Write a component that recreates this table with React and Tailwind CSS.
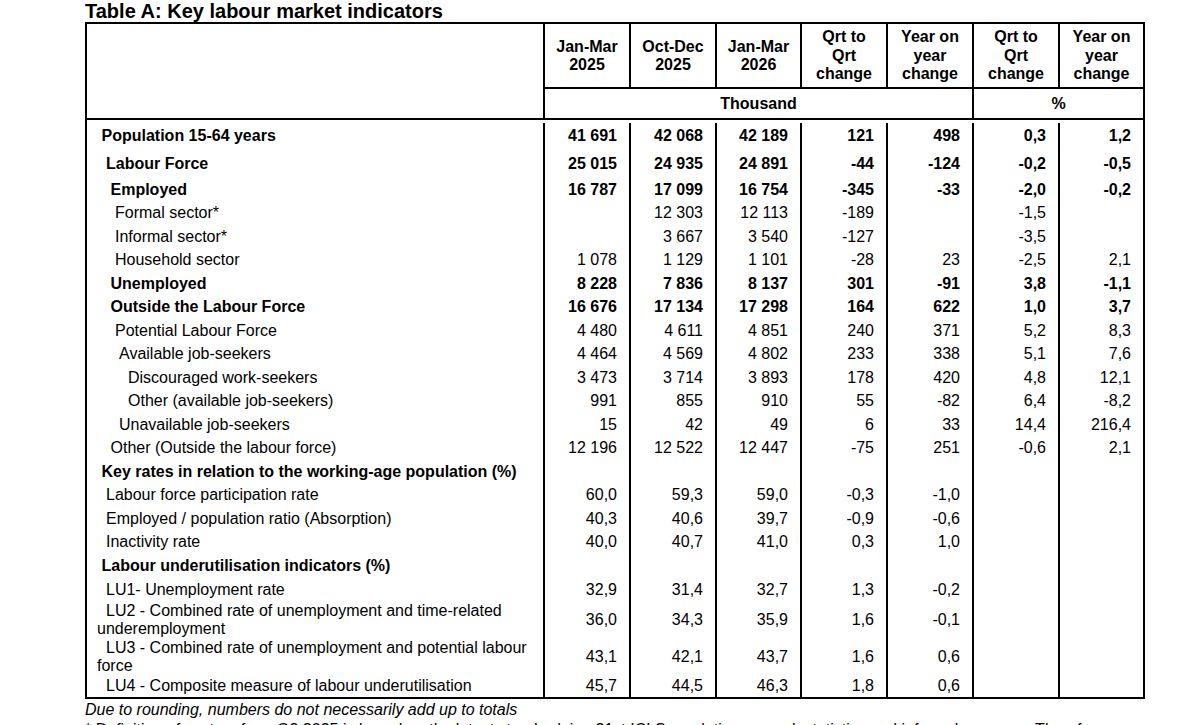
import React from 'react';

const COLS = 'grid grid-cols-[458px_86px_86px_85px_86px_86px_86px_83px]';

const heads = [
  ['Jan-Mar', '2025'],
  ['Oct-Dec', '2025'],
  ['Jan-Mar', '2026'],
  ['Qrt to', 'Qrt', 'change'],
  ['Year on', 'year', 'change'],
  ['Qrt to', 'Qrt', 'change'],
  ['Year on', 'year', 'change'],
];

const rows = [
  { label: 'Population 15-64 years', ind: 'indent-[4.5px]', bold: true, h: 'h-[29px] pt-[3px]', v: ['41 691', '42 068', '42 189', '121', '498', '0,3', '1,2'] },
  { label: 'Labour Force', ind: 'indent-[9px]', bold: true, h: 'h-[29px]', v: ['25 015', '24 935', '24 891', '-44', '-124', '-0,2', '-0,5'] },
  { label: 'Employed', ind: 'indent-[13.5px]', bold: true, v: ['16 787', '17 099', '16 754', '-345', '-33', '-2,0', '-0,2'] },
  { label: 'Formal sector*', ind: 'indent-[18px]', v: ['', '12 303', '12 113', '-189', '', '-1,5', ''] },
  { label: 'Informal sector*', ind: 'indent-[18px]', v: ['', '3 667', '3 540', '-127', '', '-3,5', ''] },
  { label: 'Household sector', ind: 'indent-[18px]', v: ['1 078', '1 129', '1 101', '-28', '23', '-2,5', '2,1'] },
  { label: 'Unemployed', ind: 'indent-[13.5px]', bold: true, v: ['8 228', '7 836', '8 137', '301', '-91', '3,8', '-1,1'] },
  { label: 'Outside the Labour Force', ind: 'indent-[13.5px]', bold: true, v: ['16 676', '17 134', '17 298', '164', '622', '1,0', '3,7'] },
  { label: 'Potential Labour Force', ind: 'indent-[18px]', v: ['4 480', '4 611', '4 851', '240', '371', '5,2', '8,3'] },
  { label: 'Available job-seekers', ind: 'indent-[22px]', v: ['4 464', '4 569', '4 802', '233', '338', '5,1', '7,6'] },
  { label: 'Discouraged work-seekers', ind: 'indent-[31px]', v: ['3 473', '3 714', '3 893', '178', '420', '4,8', '12,1'] },
  { label: 'Other (available job-seekers)', ind: 'indent-[31px]', v: ['991', '855', '910', '55', '-82', '6,4', '-8,2'] },
  { label: 'Unavailable job-seekers', ind: 'indent-[22px]', v: ['15', '42', '49', '6', '33', '14,4', '216,4'] },
  { label: 'Other (Outside the labour force)', ind: 'indent-[13.5px]', v: ['12 196', '12 522', '12 447', '-75', '251', '-0,6', '2,1'] },
  { label: 'Key rates in relation to the working-age population (%)', ind: 'indent-[4.5px]', bold: true, v: ['', '', '', '', '', '', ''] },
  { label: 'Labour force participation rate', ind: 'indent-[9px]', v: ['60,0', '59,3', '59,0', '-0,3', '-1,0', '', ''] },
  { label: 'Employed / population ratio (Absorption)', ind: 'indent-[9px]', v: ['40,3', '40,6', '39,7', '-0,9', '-0,6', '', ''] },
  { label: 'Inactivity rate', ind: 'indent-[9px]', v: ['40,0', '40,7', '41,0', '0,3', '1,0', '', ''] },
  { label: 'Labour underutilisation indicators (%)', ind: 'indent-[4.5px]', bold: true, v: ['', '', '', '', '', '', ''] },
  { label: 'LU1- Unemployment rate', ind: 'indent-[9px]', h: 'h-[24px]', v: ['32,9', '31,4', '32,7', '1,3', '-0,2', '', ''] },
  { label: 'LU2 - Combined rate of unemployment and time-related underemployment', ind: 'indent-[9px]', h: 'h-[37px]', v: ['36,0', '34,3', '35,9', '1,6', '-0,1', '', ''] },
  { label: 'LU3 - Combined rate of unemployment and potential labour force', ind: 'indent-[9px]', h: 'h-[37px]', v: ['43,1', '42,1', '43,7', '1,6', '0,6', '', ''] },
  { label: 'LU4 - Composite measure of labour underutilisation', ind: 'indent-[9px]', h: 'h-[21.5px]', v: ['45,7', '44,5', '46,3', '1,8', '0,6', '', ''] },
];

const Row = ({ row }) => (
  <div className={`${COLS} ${row.h || 'h-[23.5px]'} ${row.bold ? 'font-bold' : ''}`}>
    <div className="flex items-center border-r-2 border-black pl-[10px] pr-[6px]">
      <span className={`block ${row.ind}`}>{row.label}</span>
    </div>
    {row.v.map((val, i) => (
      <div
        key={i}
        className={`flex items-center justify-end pr-[12px] ${i < 6 ? 'border-r-2 border-black' : ''}`}
      >
        {val}
      </div>
    ))}
  </div>
);

export default function App() {
  return (
    <div className="w-[1200px] h-[725px] overflow-hidden bg-white text-black font-['Liberation_Sans',Arial,sans-serif] pl-[85px]">
      <h1 className="text-[20px] font-bold leading-[22px]">Table A: Key labour market indicators</h1>

      <div className="w-[1060px] border-2 border-black text-[16px] leading-[18px]">
        <div className={`${COLS} grid-rows-[65px_31px] font-bold`}>
          <div className="row-span-2 border-r-2 border-b-2 border-black" />
          {heads.map((lines, i) => (
            <div
              key={i}
              className={`flex flex-col items-center justify-center text-center leading-[18.5px] pt-[1px] border-b-2 border-black ${i < 6 ? 'border-r-2' : ''}`}
            >
              {lines.map(t => (
                <span key={t}>{t}</span>
              ))}
            </div>
          ))}
          <div className="col-span-5 flex items-center justify-center border-r-2 border-b-2 border-black">Thousand</div>
          <div className="col-span-2 flex items-center justify-center border-b-2 border-black">%</div>
        </div>

        {rows.map(row => (
          <Row key={row.label} row={row} />
        ))}
      </div>

      <p className="italic text-[16px] leading-[18px] mt-[2px]">Due to rounding, numbers do not necessarily add up to totals</p>
      <p className="text-[16px] leading-[18px] mt-[2px] whitespace-nowrap">
        * Definition of sectors from Q3 2025 is based on the latest standard, i.e. 21st ICLS resolution on work statistics and informal economy. Therefore
      </p>
    </div>
  );
}
